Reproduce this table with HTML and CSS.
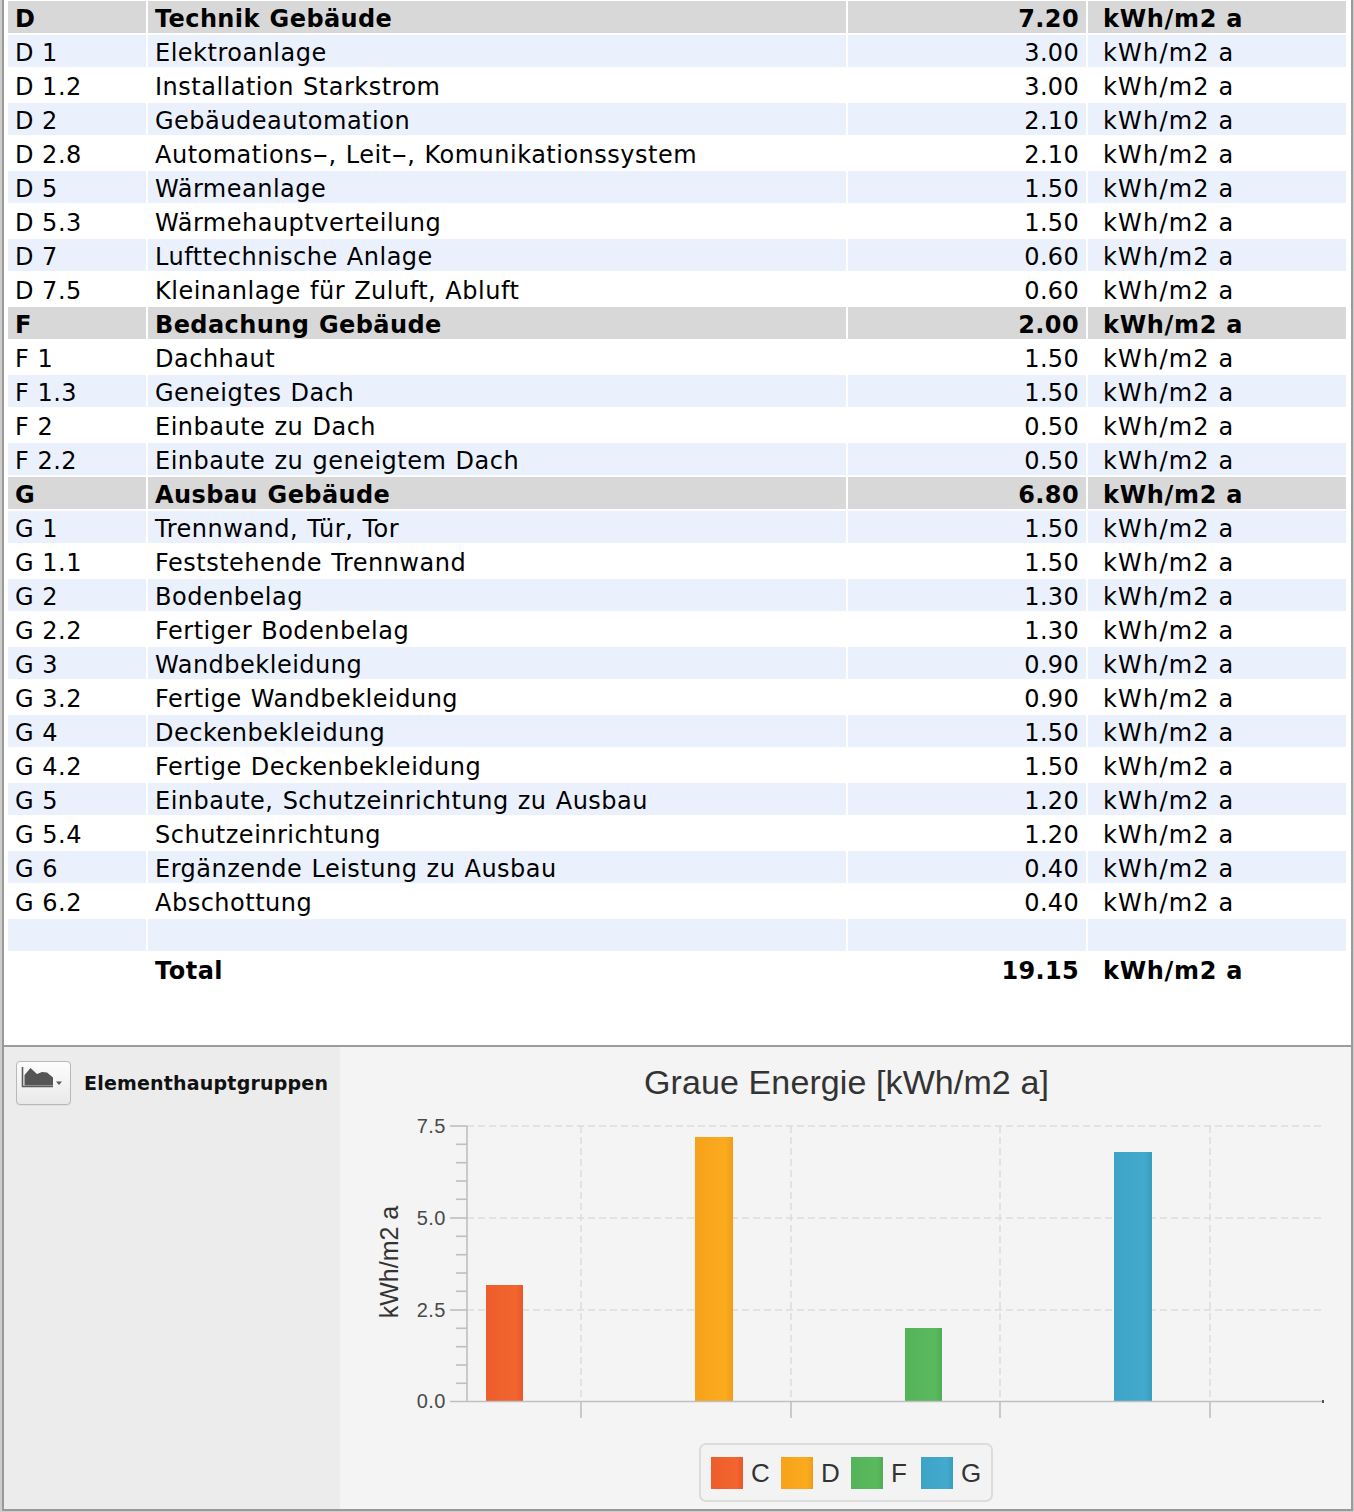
FILE: index.html
```html
<!DOCTYPE html>
<html lang="de">
<head>
<meta charset="utf-8">
<title>Graue Energie</title>
<link rel="stylesheet" href="styles.css">
</head>
<body>
<div class="window">
  <section class="table-pane">
    <div class="row group"><div class="cell c1">D</div><div class="cell c2">Technik Gebäude</div><div class="cell c3">7.20</div><div class="cell c4">kWh/m2 a</div></div>
    <div class="row alt"><div class="cell c1">D 1</div><div class="cell c2">Elektroanlage</div><div class="cell c3">3.00</div><div class="cell c4">kWh/m2 a</div></div>
    <div class="row"><div class="cell c1">D 1.2</div><div class="cell c2">Installation Starkstrom</div><div class="cell c3">3.00</div><div class="cell c4">kWh/m2 a</div></div>
    <div class="row alt"><div class="cell c1">D 2</div><div class="cell c2">Gebäudeautomation</div><div class="cell c3">2.10</div><div class="cell c4">kWh/m2 a</div></div>
    <div class="row"><div class="cell c1">D 2.8</div><div class="cell c2">Automations<span class="hy">-</span>, Leit<span class="hy">-</span>, Komunikationssystem</div><div class="cell c3">2.10</div><div class="cell c4">kWh/m2 a</div></div>
    <div class="row alt"><div class="cell c1">D 5</div><div class="cell c2">Wärmeanlage</div><div class="cell c3">1.50</div><div class="cell c4">kWh/m2 a</div></div>
    <div class="row"><div class="cell c1">D 5.3</div><div class="cell c2">Wärmehauptverteilung</div><div class="cell c3">1.50</div><div class="cell c4">kWh/m2 a</div></div>
    <div class="row alt"><div class="cell c1">D 7</div><div class="cell c2">Lufttechnische Anlage</div><div class="cell c3">0.60</div><div class="cell c4">kWh/m2 a</div></div>
    <div class="row"><div class="cell c1">D 7.5</div><div class="cell c2">Kleinanlage für Zuluft, Abluft</div><div class="cell c3">0.60</div><div class="cell c4">kWh/m2 a</div></div>
    <div class="row group"><div class="cell c1">F</div><div class="cell c2">Bedachung Gebäude</div><div class="cell c3">2.00</div><div class="cell c4">kWh/m2 a</div></div>
    <div class="row"><div class="cell c1">F 1</div><div class="cell c2">Dachhaut</div><div class="cell c3">1.50</div><div class="cell c4">kWh/m2 a</div></div>
    <div class="row alt"><div class="cell c1">F 1.3</div><div class="cell c2">Geneigtes Dach</div><div class="cell c3">1.50</div><div class="cell c4">kWh/m2 a</div></div>
    <div class="row"><div class="cell c1">F 2</div><div class="cell c2">Einbaute zu Dach</div><div class="cell c3">0.50</div><div class="cell c4">kWh/m2 a</div></div>
    <div class="row alt"><div class="cell c1">F 2.2</div><div class="cell c2">Einbaute zu geneigtem Dach</div><div class="cell c3">0.50</div><div class="cell c4">kWh/m2 a</div></div>
    <div class="row group"><div class="cell c1">G</div><div class="cell c2">Ausbau Gebäude</div><div class="cell c3">6.80</div><div class="cell c4">kWh/m2 a</div></div>
    <div class="row alt"><div class="cell c1">G 1</div><div class="cell c2">Trennwand, Tür, Tor</div><div class="cell c3">1.50</div><div class="cell c4">kWh/m2 a</div></div>
    <div class="row"><div class="cell c1">G 1.1</div><div class="cell c2">Feststehende Trennwand</div><div class="cell c3">1.50</div><div class="cell c4">kWh/m2 a</div></div>
    <div class="row alt"><div class="cell c1">G 2</div><div class="cell c2">Bodenbelag</div><div class="cell c3">1.30</div><div class="cell c4">kWh/m2 a</div></div>
    <div class="row"><div class="cell c1">G 2.2</div><div class="cell c2">Fertiger Bodenbelag</div><div class="cell c3">1.30</div><div class="cell c4">kWh/m2 a</div></div>
    <div class="row alt"><div class="cell c1">G 3</div><div class="cell c2">Wandbekleidung</div><div class="cell c3">0.90</div><div class="cell c4">kWh/m2 a</div></div>
    <div class="row"><div class="cell c1">G 3.2</div><div class="cell c2">Fertige Wandbekleidung</div><div class="cell c3">0.90</div><div class="cell c4">kWh/m2 a</div></div>
    <div class="row alt"><div class="cell c1">G 4</div><div class="cell c2">Deckenbekleidung</div><div class="cell c3">1.50</div><div class="cell c4">kWh/m2 a</div></div>
    <div class="row"><div class="cell c1">G 4.2</div><div class="cell c2">Fertige Deckenbekleidung</div><div class="cell c3">1.50</div><div class="cell c4">kWh/m2 a</div></div>
    <div class="row alt"><div class="cell c1">G 5</div><div class="cell c2">Einbaute, Schutzeinrichtung zu Ausbau</div><div class="cell c3">1.20</div><div class="cell c4">kWh/m2 a</div></div>
    <div class="row"><div class="cell c1">G 5.4</div><div class="cell c2">Schutzeinrichtung</div><div class="cell c3">1.20</div><div class="cell c4">kWh/m2 a</div></div>
    <div class="row alt"><div class="cell c1">G 6</div><div class="cell c2">Ergänzende Leistung zu Ausbau</div><div class="cell c3">0.40</div><div class="cell c4">kWh/m2 a</div></div>
    <div class="row"><div class="cell c1">G 6.2</div><div class="cell c2">Abschottung</div><div class="cell c3">0.40</div><div class="cell c4">kWh/m2 a</div></div>
    <div class="row alt"><div class="cell c1"></div><div class="cell c2"></div><div class="cell c3"></div><div class="cell c4"></div></div>
    <div class="row total"><div class="cell c1"></div><div class="cell c2">Total</div><div class="cell c3">19.15</div><div class="cell c4">kWh/m2 a</div></div>
  </section>

  <section class="chart-pane">
    <aside class="side">
      <div class="side-head">
        <button class="chart-btn" type="button" aria-label="Diagrammtyp">
          <svg width="55" height="44" viewBox="0 0 55 44">
            <path d="M6.5 6 V25.5 H37" fill="none" stroke="#5a5a5a" stroke-width="1.6"/>
            <path d="M8.5 24.5 V14 L14.5 7 L21 13 L26 11 L31 11.5 L37 16.5 V24.5 Z" fill="#555"/>
            <path d="M40 20.5 H46 L43 24 Z" fill="#555"/>
          </svg>
        </button>
        <span class="side-title">Elementhauptgruppen</span>
      </div>
    </aside>
    <div class="plot">
      <svg class="chart" width="1011" height="462" viewBox="340 1047 1011 462">
        <defs>
          <linearGradient id="gC" x1="0" x2="1" y1="0" y2="0"><stop offset="0" stop-color="#ee5d2c"/><stop offset="0.8" stop-color="#f2652e"/><stop offset="1" stop-color="#e8572a"/></linearGradient>
          <linearGradient id="gD" x1="0" x2="1" y1="0" y2="0"><stop offset="0" stop-color="#f7a21a"/><stop offset="0.8" stop-color="#fbab1e"/><stop offset="1" stop-color="#f29c18"/></linearGradient>
          <linearGradient id="gF" x1="0" x2="1" y1="0" y2="0"><stop offset="0" stop-color="#55b35a"/><stop offset="0.8" stop-color="#5ab85d"/><stop offset="1" stop-color="#50ac55"/></linearGradient>
          <linearGradient id="gG" x1="0" x2="1" y1="0" y2="0"><stop offset="0" stop-color="#3da4c8"/><stop offset="0.8" stop-color="#43aacd"/><stop offset="1" stop-color="#389dc0"/></linearGradient>
        </defs>
        <text class="title" x="846.5" y="1094" text-anchor="middle">Graue Energie [kWh/m2 a]</text>

        <g class="grid">
          <line x1="467" y1="1126" x2="1324" y2="1126"/>
          <line x1="467" y1="1218" x2="1324" y2="1218"/>
          <line x1="467" y1="1310" x2="1324" y2="1310"/>
          <line x1="581" y1="1126" x2="581" y2="1398"/>
          <line x1="791" y1="1126" x2="791" y2="1398"/>
          <line x1="1000" y1="1126" x2="1000" y2="1398"/>
          <line x1="1210" y1="1126" x2="1210" y2="1398"/>
        </g>

        <rect x="486" y="1285" width="37" height="116" fill="url(#gC)"/>
        <rect x="695" y="1137" width="38" height="264" fill="url(#gD)"/>
        <rect x="905" y="1328" width="37" height="73" fill="url(#gF)"/>
        <rect x="1114" y="1152" width="38" height="249" fill="url(#gG)"/>

        <g class="axis">
          <line x1="467" y1="1126" x2="467" y2="1401"/>
          <line x1="450" y1="1401.5" x2="1324" y2="1401.5"/>
          <line x1="450" y1="1126" x2="467" y2="1126"/>
          <line x1="450" y1="1218" x2="467" y2="1218"/>
          <line x1="450" y1="1310" x2="467" y2="1310"/>
          <line x1="456" y1="1144.3" x2="467" y2="1144.3"/>
          <line x1="456" y1="1162.7" x2="467" y2="1162.7"/>
          <line x1="456" y1="1181" x2="467" y2="1181"/>
          <line x1="456" y1="1199.3" x2="467" y2="1199.3"/>
          <line x1="456" y1="1236.3" x2="467" y2="1236.3"/>
          <line x1="456" y1="1254.7" x2="467" y2="1254.7"/>
          <line x1="456" y1="1273" x2="467" y2="1273"/>
          <line x1="456" y1="1291.3" x2="467" y2="1291.3"/>
          <line x1="456" y1="1328.3" x2="467" y2="1328.3"/>
          <line x1="456" y1="1346.7" x2="467" y2="1346.7"/>
          <line x1="456" y1="1365" x2="467" y2="1365"/>
          <line x1="456" y1="1383.3" x2="467" y2="1383.3"/>
          <line x1="581" y1="1401" x2="581" y2="1418"/>
          <line x1="791" y1="1401" x2="791" y2="1418"/>
          <line x1="1000" y1="1401" x2="1000" y2="1418"/>
          <line x1="1210" y1="1401" x2="1210" y2="1418"/>
        </g>
        <rect x="1322" y="1400" width="2" height="3" fill="#555"/>

        <g class="ticks">
          <text x="446" y="1133" text-anchor="end">7.5</text>
          <text x="446" y="1225" text-anchor="end">5.0</text>
          <text x="446" y="1317" text-anchor="end">2.5</text>
          <text x="446" y="1408" text-anchor="end">0.0</text>
        </g>
        <text class="ylabel" x="0" y="0" text-anchor="middle" transform="translate(398 1262) rotate(-90)">kWh/m2 a</text>

        <rect class="legend" x="700" y="1444" width="292" height="57" rx="6"/>
        <rect x="711" y="1457" width="32" height="32" fill="url(#gC)"/>
        <text class="leg" x="751" y="1482">C</text>
        <rect x="781" y="1457" width="32" height="32" fill="url(#gD)"/>
        <text class="leg" x="821" y="1482">D</text>
        <rect x="851" y="1457" width="32" height="32" fill="url(#gF)"/>
        <text class="leg" x="891" y="1482">F</text>
        <rect x="921" y="1457" width="32" height="32" fill="url(#gG)"/>
        <text class="leg" x="961" y="1482">G</text>
      </svg>
    </div>
  </section>
</div>
</body>
</html>
```

FILE: styles.css
```css
html, body {
  margin: 0;
  padding: 0;
}
body {
  background: #cdcdcd;
  width: 1354px;
  height: 1512px;
  overflow: hidden;
}
.window {
  margin-left: 2px;
  width: 1347px;
  height: 1509px;
  border-left: 2px solid #999;
  border-right: 2px solid #9a9a9a;
  border-bottom: 2px solid #999;
  background: #fff;
  display: flex;
  flex-direction: column;
}
.table-pane {
  height: 1044px;
  padding: 1px 5px 0 4px;
  background: #fff;
  border-bottom: 2px solid #9c9c9c;
  font-family: "DejaVu Sans", "Liberation Sans", sans-serif;
  font-size: 24px;
  color: #000;
}
.row {
  display: grid;
  grid-template-columns: 138px 698px 238px 258px;
  column-gap: 2px;
  height: 32px;
  margin-bottom: 2px;
}
.cell {
  display: flex;
  align-items: center;
  white-space: nowrap;
  overflow: hidden;
  line-height: 32px;
  padding-top: 3px;
  box-sizing: border-box;
  letter-spacing: 0.5px;
  word-spacing: 1px;
}
.hy {
  display: inline-block;
  transform: scaleX(1.9);
  margin: 0 4px 0 3px;
  letter-spacing: 0;
}
.c1 { padding-left: 7px; word-spacing: 0; }
.c2 { padding-left: 7px; }
.c3 { justify-content: flex-end; padding-right: 7px; letter-spacing: 0.3px; }
.c4 { padding-left: 15px; letter-spacing: 1.2px; word-spacing: 0; }
.row.alt .cell { background: #ebf1fc; }
.row.group .cell { background: #d8d8d8; font-weight: bold; letter-spacing: 0.4px; }
.row.group .c4, .row.total .c4 { letter-spacing: 0.7px; }
.row.total .cell { font-weight: bold; }

.chart-pane {
  flex: 1;
  display: flex;
  min-height: 0;
}
.side {
  width: 336px;
  background: #ececec;
  padding: 14px 0 0 12px;
  box-sizing: border-box;
}
.side-head {
  display: flex;
  align-items: center;
  gap: 13px;
}
.chart-btn {
  width: 55px;
  height: 44px;
  padding: 0;
  border: 1px solid #b8b8b8;
  border-radius: 4px;
  background: linear-gradient(#fdfdfd, #e9e9e9);
  box-sizing: border-box;
  display: flex;
  align-items: center;
  justify-content: center;
  box-shadow: 0 1px 0 rgba(0,0,0,0.05);
}
.chart-btn svg {
  display: block;
  margin: -1px;
  flex: none;
}
.side-title {
  font-family: "DejaVu Sans", sans-serif;
  font-weight: bold;
  font-size: 19px;
  letter-spacing: 0.2px;
  color: #111;
}
.plot {
  flex: 1;
  background: #f4f4f4;
}
.chart {
  display: block;
  font-family: "Liberation Sans", Arial, sans-serif;
}
.title {
  font-size: 34px;
  fill: #333;
  letter-spacing: 0.1px;
}
.grid line {
  stroke: #dcdcdc;
  stroke-width: 1.5;
  stroke-dasharray: 7 4;
}
.axis line {
  stroke: #bfbfbf;
  stroke-width: 1.6;
}
.ticks text {
  font-size: 20px;
  fill: #4a4a4a;
  letter-spacing: 0.5px;
}
.ylabel {
  font-size: 25px;
  fill: #333;
}
.legend {
  fill: #f3f3f3;
  stroke: #dcdcdc;
  stroke-width: 2;
}
.leg {
  font-size: 26px;
  fill: #333;
}
```
